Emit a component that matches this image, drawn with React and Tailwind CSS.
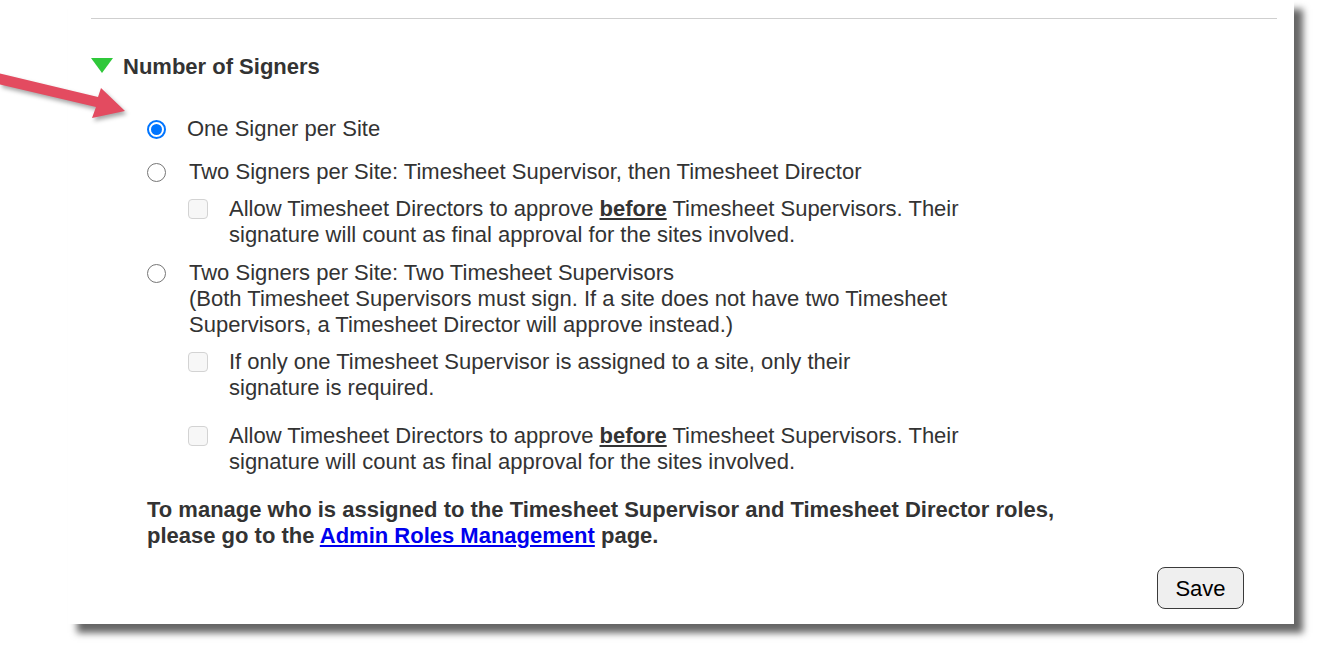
import React from "react";

const font = { fontFamily: '"Liberation Sans", Arial, sans-serif' };

function Radio({ checked }) {
  if (checked) {
    return (
      <span className="flex h-[19px] w-[19px] shrink-0 items-center justify-center rounded-full border-[2px] border-[#0075ff] bg-white">
        <span className="h-[11px] w-[11px] rounded-full bg-[#0075ff]" />
      </span>
    );
  }
  return <span className="block h-[19px] w-[19px] shrink-0 rounded-full border-[1.5px] border-[#767676] bg-white" />;
}

function Checkbox() {
  return <span className="mt-[3px] block h-[20px] w-[20px] shrink-0 rounded-[4px] border-[1.5px] border-[#d3d3d3] bg-[#f7f7f7]" />;
}

export default function App() {
  return (
    <div className="relative h-[648px] w-full bg-white text-[#333]" style={font}>
      <div className="ml-[68px] h-[624px] w-[1226px] bg-white pt-[18px] shadow-[9px_9px_7px_rgba(0,0,0,0.6)]">
        <div className="ml-[23px] mr-[17px] border-t border-[#cfcfcf]" />

        <div className="ml-[23px] mt-[35px] flex h-[26px] items-center">
          <svg width="22" height="16" viewBox="0 0 22 16" className="mt-[-2px]">
            <polygon points="0,0 22,0 11,15" fill="#2fc83a" />
          </svg>
          <span className="ml-[10px] text-[22px] font-bold leading-[26px]">Number of Signers</span>
        </div>

        <div className="ml-[79px] mt-[36px] flex h-[26px] items-center text-[22px] leading-[26px]">
          <Radio checked />
          <span className="ml-[21px] whitespace-nowrap">One Signer per Site</span>
        </div>

        <div className="ml-[79px] mt-[17px] flex h-[26px] items-center text-[22px] leading-[26px]">
          <Radio />
          <span className="ml-[23px] whitespace-nowrap">
            Two Signers per Site: Timesheet Supervisor, then Timesheet Director
          </span>
        </div>

        <div className="ml-[120px] mt-[11px] flex items-start text-[22px] leading-[26px]">
          <Checkbox />
          <span className="ml-[21px] whitespace-nowrap">
            Allow Timesheet Directors to approve <b className="underline">before</b> Timesheet Supervisors. Their
            <br />
            signature will count as final approval for the sites involved.
          </span>
        </div>

        <div className="ml-[79px] mt-[12px] flex items-start text-[22px] leading-[26px]">
          <span className="mt-[4px] flex shrink-0">
            <Radio />
          </span>
          <span className="ml-[23px] whitespace-nowrap">
            Two Signers per Site: Two Timesheet Supervisors
            <br />
            (Both Timesheet Supervisors must sign. If a site does not have two Timesheet
            <br />
            Supervisors, a Timesheet Director will approve instead.)
          </span>
        </div>

        <div className="ml-[120px] mt-[11px] flex items-start text-[22px] leading-[26px]">
          <Checkbox />
          <span className="ml-[21px] whitespace-nowrap">
            If only one Timesheet Supervisor is assigned to a site, only their
            <br />
            signature is required.
          </span>
        </div>

        <div className="ml-[120px] mt-[22px] flex items-start text-[22px] leading-[26px]">
          <Checkbox />
          <span className="ml-[21px] whitespace-nowrap">
            Allow Timesheet Directors to approve <b className="underline">before</b> Timesheet Supervisors. Their
            <br />
            signature will count as final approval for the sites involved.
          </span>
        </div>

        <p className="ml-[79px] mt-[22px] whitespace-nowrap text-[22px] font-bold leading-[26px]">
          To manage who is assigned to the Timesheet Supervisor and Timesheet Director roles,
          <br />
          please go to the{" "}
          <a href="#" className="text-[#0000ee] underline">
            Admin Roles Management
          </a>{" "}
          page.
        </p>

        <div className="mr-[50px] mt-[18px] flex justify-end">
          <button className="h-[42px] w-[87px] rounded-[8px] border border-[#3a3a3a] bg-[#efefef] text-[22px] text-black" style={font}>
            Save
          </button>
        </div>
      </div>

      <svg
        className="absolute left-0 top-0 drop-shadow-[2px_3px_2px_rgba(0,0,0,0.35)]"
        width="140"
        height="130"
        viewBox="0 0 140 130"
      >
        <polygon
          points="-2,73 98,97 101,88 125,111 92,118 96,107 -2,84"
          fill="#e34b60"
        />
      </svg>
    </div>
  );
}
